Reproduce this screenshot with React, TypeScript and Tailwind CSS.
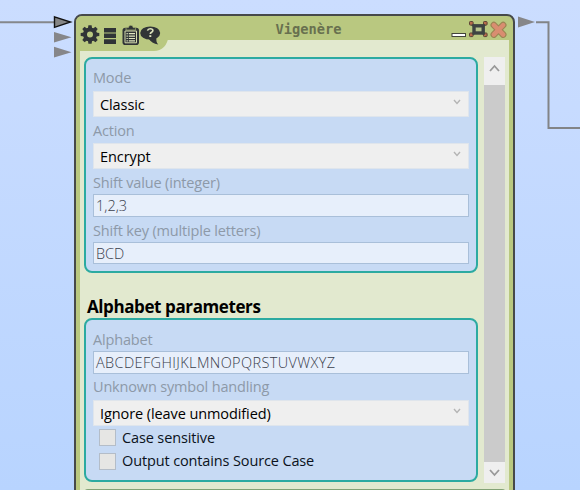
import React from "react";

function Label({ children, className }: { children: string; className: string }) {
  return (
    <div className={`flex shrink-0 items-center whitespace-nowrap text-[14.5px] tracking-[-0.17px] text-[#8d99a8] ${className}`}>
      {children}
    </div>
  );
}

function Select({ value, className }: { value: string; className: string }) {
  return (
    <div className={`flex shrink-0 items-center justify-between border border-[#dfe5ec] bg-[#efefef] pl-[6px] pr-[7px] text-[14.5px] tracking-[-0.09px] text-black ${className}`}>
      <span className="whitespace-nowrap pt-px">{value}</span>
      <svg width="8" height="6" viewBox="0 0 8 6" className="-mt-1" fill="none" stroke="#b4b4b4" strokeWidth="1.4">
        <path d="M1 1L4 4.4L7 1" />
      </svg>
    </div>
  );
}

function Field({ value, className }: { value: string; className: string }) {
  return (
    <div className={`flex shrink-0 items-center whitespace-nowrap border border-[#a9bfd9] bg-[#e7effb] pl-[2px] pt-px text-[14.5px] font-light text-[#3a404c] ${className}`}>
      {value}
    </div>
  );
}

function Check({ label }: { label: string }) {
  return (
    <div className="flex h-[23.5px] items-center pl-[6px]">
      <span className="size-[17px] shrink-0 border border-[#b4bdc8] bg-[#e6e6e4]" />
      <span className="ml-[6px] whitespace-nowrap text-[14.5px] tracking-[-0.13px] text-[#0b1220]">{label}</span>
    </div>
  );
}

function ToolIcons() {
  return (
    <svg width="84" height="26" viewBox="79 24 84 26" className="block" fill="#303436">
      <g transform="translate(90 34.500)">
        <circle r="5" fill="none" stroke="#303436" strokeWidth="4" />
        {[0, 45, 90, 135, 180, 225, 270, 315].map((a) => (
          <path key={a} d="M-2.1 -6L-1.6 -9.3H1.6L2.1 -6Z" transform={`rotate(${a})`} />
        ))}
      </g>
      <path d="M104 28h12v4.600h-12zM104 33.400h12v4.600h-12zM104 39.200h12v4.800h-12z" />
      <rect x="122.500" y="27.800" width="16.500" height="17.200" rx="2.800" />
      <path d="M126 30v-2.400h2.400a2.400 2.400 0 0 1 4.800 0h2.400v2.400z" stroke="#b8c77f" strokeWidth=".6" />
      <path d="M125 31h11.500v11.800H125z" fill="none" stroke="#d5dcad" strokeWidth="1" />
      <path d="M126.500 33.700h1.300m1 0h6.200M126.500 36.100h1.300m1 0h6.200M126.500 38.500h1.300m1 0h6.200M126.500 40.900h1.300m1 0h6.200" stroke="#e0e6c0" strokeWidth="1.200" />
      <ellipse cx="150.200" cy="33" rx="10" ry="6.600" />
      <path d="M148.500 38.500C150.800 41.800 153.600 44 158.300 44.600C156.300 42.500 156 40.300 156.600 36.500Z" />
      <path d="M147.500 30.600c.3-1.300 1.300-1.900 2.700-1.900 1.700 0 2.700.7 2.700 1.900 0 1.600-2.600 1.700-2.600 3.300" fill="none" stroke="#dde3bd" strokeWidth="1.600" />
      <rect x="149.300" y="35.200" width="2" height="1.800" fill="#dde3bd" />
    </svg>
  );
}

function WindowButtons() {
  return (
    <svg width="58" height="24" viewBox="450 18 58 24" className="block">
      <rect x="452" y="33.500" width="13.500" height="3" fill="#fff" stroke="#42443a" strokeWidth="1" />
      <path d="M471 23.500l15 12M486 23.500l-15 12" stroke="#3e4442" strokeWidth="2.500" />
      <g fill="#b66b4c" stroke="#5b4335" strokeWidth="1">
        <rect x="469.500" y="21.500" width="3.600" height="3.600" rx=".8" />
        <rect x="483.500" y="21.500" width="3.600" height="3.600" rx=".8" />
        <rect x="469.500" y="33" width="3.600" height="3.600" rx=".8" />
        <rect x="483.500" y="33" width="3.600" height="3.600" rx=".8" />
      </g>
      <rect x="474" y="25.800" width="9.200" height="7.200" fill="#b8c58c" stroke="#3e4442" strokeWidth="3.400" />
      <g fill="none" strokeLinecap="round">
        <path d="M493.800 25l9.400 9.600M503.200 25l-9.400 9.600" stroke="#9c8553" strokeWidth="6.600" />
        <path d="M493.800 25l9.400 9.600M503.200 25l-9.400 9.600" stroke="#d98d70" strokeWidth="4.400" />
      </g>
    </svg>
  );
}

function Wires() {
  return (
    <svg className="absolute inset-0" width="580" height="490" viewBox="0 0 580 490" fill="none">
      <path d="M0 22.300H54" stroke="#85878b" strokeWidth="2" />
      <path d="M54.500 16.800L70.500 22L54.500 27.300Z" fill="#858585" stroke="#111" strokeWidth="1.400" />
      <path d="M54 32L71.500 37.300L54 42.500ZM54 46.800L71.500 52.200L54 57.500ZM518 16.500L535 22L518 27.500Z" fill="#868689" />
      <path d="M536 22.300H548.500V128H580" stroke="#828487" strokeWidth="2" />
    </svg>
  );
}

function ScrollBar() {
  return (
    <div className="flex h-[426px] w-[21px] flex-col bg-[#cbcbcb]">
      <div className="flex h-7 items-center justify-center bg-[#efefef]">
        <svg width="11" height="8" viewBox="0 0 11 8" className="-mt-1.5" fill="none" stroke="#999" strokeWidth="1.800">
          <path d="M1 7L5.500 2L10 7" />
        </svg>
      </div>
      <div className="grow" />
      <div className="flex h-[21px] items-center justify-center bg-[#efefef]">
        <svg width="11" height="8" viewBox="0 0 11 8" fill="none" stroke="#999" strokeWidth="1.800">
          <path d="M1 1L5.500 6L10 1" />
        </svg>
      </div>
    </div>
  );
}

export default function App() {
  return (
    <div className="relative h-[490px] w-[580px] overflow-hidden bg-linear-to-b from-[#cbddff] to-[#b8d4ff] font-['Open_Sans','Noto_Sans',sans-serif]">
      <Wires />
      <div className="absolute left-[74px] top-[14px] h-[520px] w-[441px] overflow-hidden rounded-lg border-2 border-[#46494a] bg-[#b9c880]">
        <div className="relative h-6">
          <div className="absolute left-0 top-0 z-10 h-[35px] w-[92px] rounded-br-[14px] bg-[#b9c880] pl-[3px] pt-2">
            <ToolIcons />
          </div>
          <div className="flex h-6 items-center justify-center pl-[28px] pt-[3px] font-['DejaVu_Sans_Mono',monospace] text-[13.700px] font-bold text-[#68704f]">
            <span>Vigenère</span>
          </div>
          <div className="absolute right-[5px] top-[2px]">
            <WindowButtons />
          </div>
        </div>
        <div className="mx-1 flex h-[480px] justify-between bg-[#e2e9cf] pl-1 pr-[4px] pt-[17px]">
          <div className="flex w-[394px] flex-col">
            <section className="flex h-[216px] flex-col rounded-lg border-2 border-[#2caaa1] bg-[#c7daf4] pl-[7px] pr-[7px] pt-[6px]">
              <Label className="h-[26px]">Mode</Label>
              <Select value="Classic" className="h-[26px]" />
              <Label className="h-[26px] pt-px">Action</Label>
              <Select value="Encrypt" className="h-[26px]" />
              <Label className="h-[25px] pt-[3px]">Shift value (integer)</Label>
              <Field value="1,2,3" className="h-[23px]" />
              <Label className="h-[25px] pt-[3px]">Shift key (multiple letters)</Label>
              <Field value="BCD" className="h-[22px]" />
            </section>
            <h2 className="flex h-[45px] items-end whitespace-nowrap pl-[3px] text-[17px] font-bold leading-[23px] tracking-[-0.4px] text-black">Alphabet parameters</h2>
            <section className="flex h-[164px] flex-col rounded-lg border-2 border-[#2caaa1] bg-[#c7daf4] pl-[7px] pr-[7px] pt-[7px]">
              <Label className="h-6 pt-px">Alphabet</Label>
              <Field value="ABCDEFGHIJKLMNOPQRSTUVWXYZ" className="h-[23px] tracking-[0.38px]" />
              <Label className="h-[26px]">Unknown symbol handling</Label>
              <Select value="Ignore (leave unmodified)" className="h-[26px]" />
              <Check label="Case sensitive" />
              <Check label="Output contains Source Case" />
            </section>
            <div className="mt-[7px] h-3 w-[422px] rounded-t-sm bg-[#83a276]" />
          </div>
          <ScrollBar />
        </div>
      </div>
    </div>
  );
}
